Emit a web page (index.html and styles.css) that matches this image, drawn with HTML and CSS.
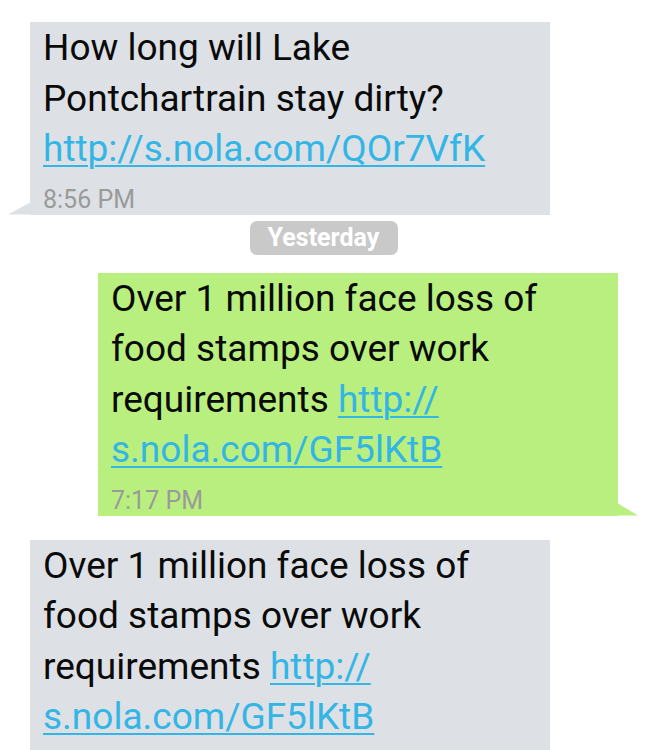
FILE: index.html
```html
<!DOCTYPE html>
<html>
<head>
<meta charset="utf-8">
<link rel="stylesheet" href="styles.css">
</head>
<body>
<div class="thread">
  <div class="msg in">
    <div class="body">How long will Lake Pontchartrain stay dirty? <a href="#">http://s.nola.com/QOr7VfK</a></div>
    <div class="time">8:56 PM</div>
  </div>
  <div class="day"><span class="pill">Yesterday</span></div>
  <div class="msg out">
    <div class="body">Over 1 million face loss of food stamps over work requirements <a href="#">http://<br>s.nola.com/GF5lKtB</a></div>
    <div class="time">7:17 PM</div>
  </div>
  <div class="msg in last">
    <div class="body">Over 1 million face loss of food stamps over work requirements <a href="#">http://<br>s.nola.com/GF5lKtB</a></div>
    <div class="time">7:17 PM</div>
  </div>
</div>
</body>
</html>
```
FILE: styles.css
```css
html, body {
  margin: 0;
  padding: 0;
  background: #ffffff;
  overflow: hidden;
}
body {
  font-family: Roboto, "Noto Sans", sans-serif;
  width: 647px;
  height: 750px;
}
.thread {
  display: flex;
  flex-direction: column;
  padding-top: 22px;
}
.msg {
  position: relative;
  width: 520px;
  box-sizing: border-box;
  padding: 1px 13px 2px 13px;
}
.msg.in {
  margin-left: 30px;
  background: #dde1e5;
}
.msg.out {
  margin-left: 98px;
  background: #b9ef7e;
  margin-top: 18px;
}
.msg.last {
  margin-top: 24px;
}
.msg.in::after {
  content: "";
  position: absolute;
  left: -22px;
  bottom: 0;
  width: 22px;
  height: 12px;
  background: #dde1e5;
  clip-path: polygon(100% 0, 100% 100%, 0 100%);
}
.msg.out::after {
  content: "";
  position: absolute;
  right: -20px;
  bottom: 0;
  width: 20px;
  height: 12px;
  background: #b9ef7e;
  clip-path: polygon(0 0, 100% 100%, 0 100%);
}
.msg.last::after {
  display: none;
}
.body {
  font-size: 37px;
  line-height: 50.5px;
  color: #0a0a0a;
}
.body a {
  color: #33b5e5;
  text-decoration: underline;
  text-decoration-thickness: 2px;
  text-underline-offset: 4px;
}
.time {
  font-size: 25px;
  line-height: 26px;
  color: #9a9a9a;
  margin-top: 12px;
}
.out .time {
  color: #9b9a9b;
}
.day {
  display: flex;
  justify-content: center;
  margin-top: 6px;
}
.pill {
  display: block;
  width: 148px;
  height: 34px;
  box-sizing: border-box;
  background: #c9c9c9;
  border-radius: 7px;
  color: #fff;
  font-weight: bold;
  font-size: 25px;
  line-height: 34px;
  text-align: center;
}
```
